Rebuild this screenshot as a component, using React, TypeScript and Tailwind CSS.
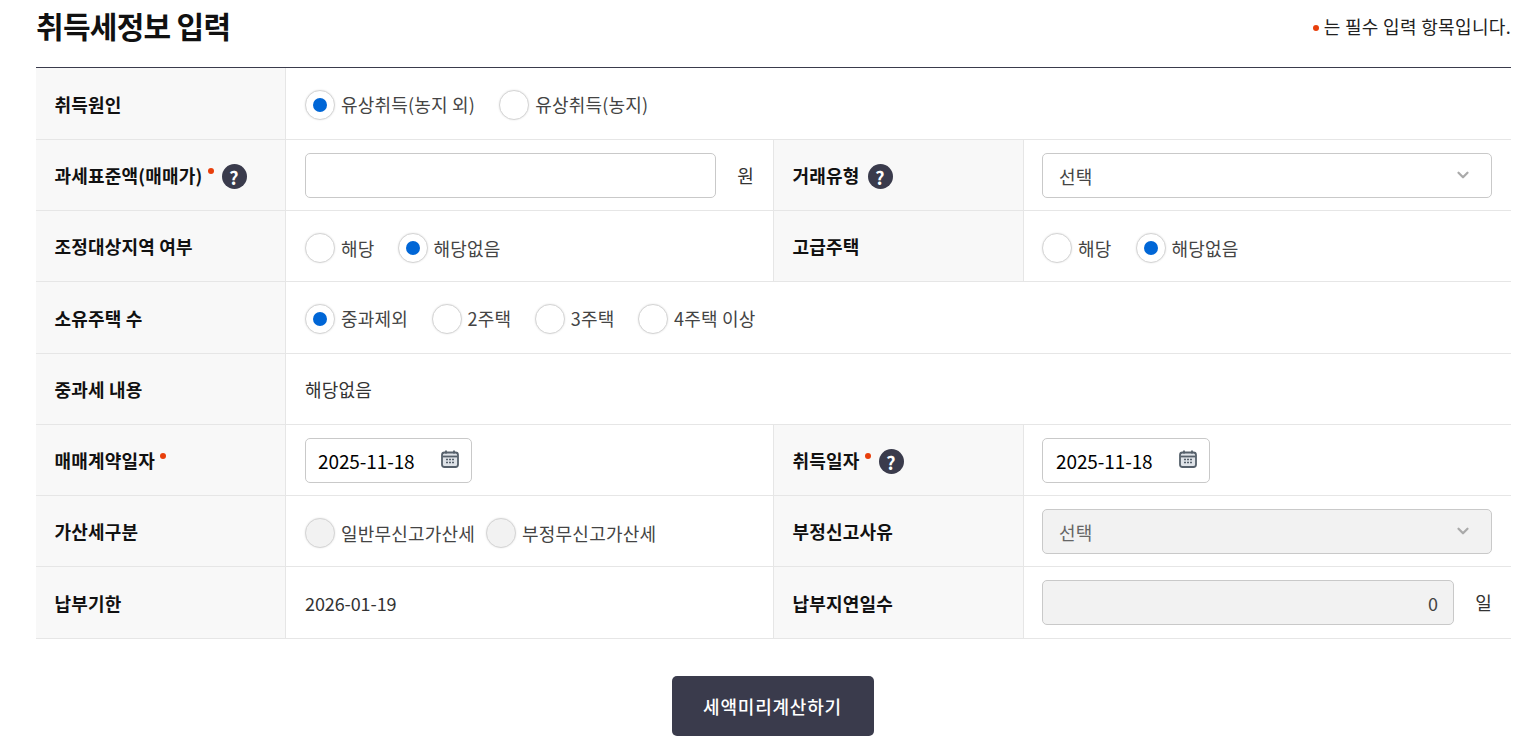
import React from 'react';
import { ChevronDown } from 'lucide-react';

const Req = () => <span className="ml-[5px] mb-2 inline-block w-[6px] h-[6px] rounded-full bg-[#e83f0c]" />;

const Help = () => (
  <span className="ml-[8px] mt-[3px] inline-flex items-center justify-center w-[25px] h-[25px] rounded-full bg-[#3a3b4c] text-white text-[18px] font-bold leading-none">
    ?
  </span>
);

const Radio = ({ label, checked, disabled }: { label: string; checked?: boolean; disabled?: boolean }) => (
  <label className="flex items-center gap-[6px]">
    <span
      className={`flex items-center justify-center w-[30px] h-[30px] rounded-full border border-[#d5d5d5] shadow-[0_0_2px_rgba(0,0,0,0.12)] ${
        disabled ? 'bg-[#f2f2f2]' : 'bg-white'
      }`}
    >
      {checked && <span className="w-[14px] h-[14px] rounded-full bg-[#0066d6]" />}
    </span>
    <span className="text-[#444]">{label}</span>
  </label>
);

const Label = ({ children, low }: { children: React.ReactNode; low?: boolean }) => (
  <div
    className={`w-[250px] shrink-0 h-full flex items-center pl-[18.5px] bg-[#f8f8f8] border-r border-[#e6e6e6] font-bold text-[#111] ${
      low ? 'pt-[2px]' : ''
    }`}
  >
    {children}
  </div>
);

const Row = ({ h, children }: { h: string; children: React.ReactNode }) => (
  <div className={`flex items-center border-b border-[#e6e6e6] ${h}`}>{children}</div>
);

const Left = ({ children, wide, className = 'gap-6' }: { children: React.ReactNode; wide?: boolean; className?: string }) => (
  <div
    className={`h-full flex items-center pl-[19px] ${className} ${
      wide ? 'flex-1' : 'w-[488px] shrink-0 border-r border-[#e6e6e6] pr-[19px]'
    }`}
  >
    {children}
  </div>
);

const Right = ({ children, className = '' }: { children: React.ReactNode; className?: string }) => (
  <div className={`flex-1 h-full flex items-center gap-6 pl-[18px] pr-[19px] ${className}`}>{children}</div>
);

const Select = ({ disabled }: { disabled?: boolean }) => (
  <div
    className={`w-full h-[45px] flex items-center justify-between pl-4 pr-[19px] rounded-[5px] border border-[#c9c9c9] ${
      disabled ? 'bg-[#f2f2f2] text-[#666]' : 'bg-white text-[#444]'
    }`}
  >
    <span className="pt-[2px]">선택</span>
    <ChevronDown size={18} strokeWidth={3} className="text-[#aaa]" />
  </div>
);

const DateBox = ({ w, pl }: { w: string; pl: string }) => (
  <div className={`${w} ${pl} h-[45px] flex items-center justify-between pr-[11px] rounded-[5px] border border-[#c9c9c9] bg-white text-black`}>
    <span className="pt-[2px] text-[19px] tracking-[-0.1px]">2025-11-18</span>
    <svg width="20" height="20" viewBox="0 0 20 20" fill="none" className="mb-[3px]">
      <rect x="2" y="3.5" width="16" height="14.5" rx="2.5" fill="#dfe3e8" stroke="#56606b" strokeWidth="1.8" />
      <path d="M2.5 7.5h15" stroke="#56606b" strokeWidth="1.8" />
      <path d="M6 1.5v3M14 1.5v3" stroke="#56606b" strokeWidth="1.8" />
      <path d="M6 10.5h2M9 10.5h2M12 10.5h2M6 13.5h2M9 13.5h2M12 13.5h2" stroke="#56606b" strokeWidth="1.4" />
    </svg>
  </div>
);

export default function App() {
  return (
    <div className="h-[742px] overflow-hidden bg-white pr-[24px] pl-[36px] text-[18px] tracking-[0.2px] text-[#333] font-['Noto_Sans_CJK_KR','Noto_Sans',sans-serif]">
      <div className="h-[67px] flex items-start justify-between">
        <h1 className="mt-[3px] text-[30px] leading-[44px] font-bold text-[#111] tracking-[-0.7px]">취득세정보 입력</h1>
        <p className="mt-[12px] flex items-center text-[18px] leading-[28px] tracking-[0.33px] text-[#222]">
          <span className="mr-[5px] mt-[3px] w-[6px] h-[6px] rounded-full bg-[#e83f0c]" />는 필수 입력 항목입니다.
        </p>
      </div>

      <div className="border-t border-[#3a3b4c]">
        <Row h="h-[72px]">
          <Label low>취득원인</Label>
          <Left wide className="gap-6 pt-[2px]">
            <Radio label="유상취득(농지 외)" checked />
            <Radio label="유상취득(농지)" />
          </Left>
        </Row>
        <Row h="h-[71px]">
          <Label>
            과세표준액(매매가)
            <Req />
            <Help />
          </Label>
          <Left>
            <div className="flex-1 h-[45px] rounded-[5px] border border-[#c9c9c9] bg-white" />
            <span className="-ml-[3px]">원</span>
          </Left>
          <Label>
            거래유형
            <Help />
          </Label>
          <Right>
            <Select />
          </Right>
        </Row>
        <Row h="h-[71px]">
          <Label>조정대상지역 여부</Label>
          <Left className="gap-[23px] pt-[4px]">
            <Radio label="해당" />
            <Radio label="해당없음" checked />
          </Left>
          <Label>고급주택</Label>
          <Right className="pt-[4px]">
            <Radio label="해당" />
            <Radio label="해당없음" checked />
          </Right>
        </Row>
        <Row h="h-[72px]">
          <Label low>소유주택 수</Label>
          <Left wide className="gap-[23.5px] pt-[2px]">
            <Radio label="중과제외" checked />
            <Radio label="2주택" />
            <Radio label="3주택" />
            <Radio label="4주택 이상" />
          </Left>
        </Row>
        <Row h="h-[71px]">
          <Label>중과세 내용</Label>
          <Left wide>해당없음</Left>
        </Row>
        <Row h="h-[71px]">
          <Label>
            매매계약일자
            <Req />
          </Label>
          <Left>
            <DateBox w="w-[167px]" pl="pl-3" />
          </Left>
          <Label>
            취득일자
            <Req />
            <Help />
          </Label>
          <Right>
            <DateBox w="w-[168px]" pl="pl-[13px]" />
          </Right>
        </Row>
        <Row h="h-[71px]">
          <Label>가산세구분</Label>
          <Left className="gap-[11px] pt-[4px]">
            <Radio label="일반무신고가산세" disabled />
            <Radio label="부정무신고가산세" disabled />
          </Left>
          <Label>부정신고사유</Label>
          <Right>
            <Select disabled />
          </Right>
        </Row>
        <Row h="h-[72px]">
          <Label low>납부기한</Label>
          <Left className="gap-6 pt-[2px] tracking-[-0.1px]">2026-01-19</Left>
          <Label low>납부지연일수</Label>
          <Right>
            <div className="flex-1 h-[45px] flex items-center justify-end pr-[15px] pt-[2px] rounded-[5px] border border-[#c9c9c9] bg-[#f2f2f2] text-[#444]">
              0
            </div>
            <span className="-ml-[3px]">일</span>
          </Right>
        </Row>
      </div>

      <div className="mt-[37px] flex justify-center">
        <button className="mr-[2px] w-[202px] h-[60px] rounded-[5px] bg-[#3a3b4c] text-white text-[18px] font-medium tracking-[0.8px]">
          세액미리계산하기
        </button>
      </div>
    </div>
  );
}
